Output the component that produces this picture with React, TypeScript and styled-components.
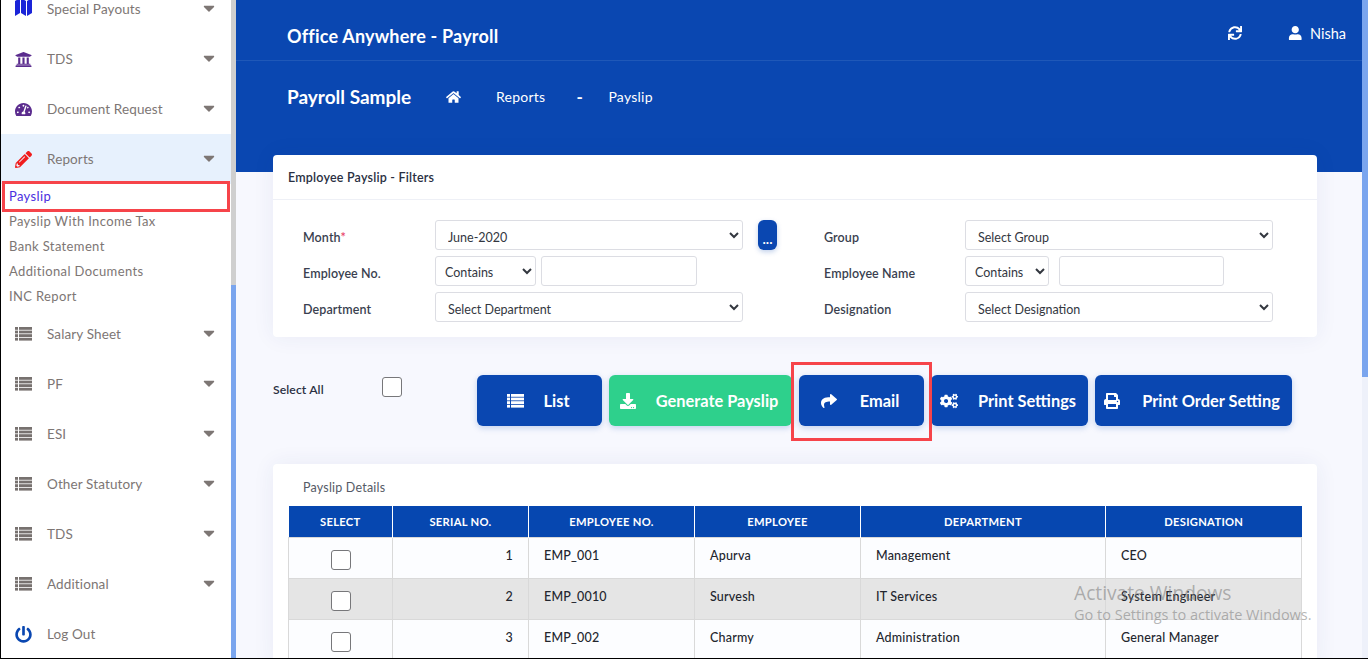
import React from "react"
import styled, { createGlobalStyle } from "styled-components"
import {
  FaUniversity,
  FaTachometerAlt,
  FaPencilAlt,
  FaCaretDown,
  FaPowerOff,
  FaSync,
  FaUser,
  FaHome,
  FaDownload,
  FaShare,
  FaCogs,
  FaPrint,
} from "react-icons/fa"

const BLUE = "#0a47b1"
const FONT = `Lato, "Noto Sans", "Liberation Sans", sans-serif`

const GlobalStyle = createGlobalStyle`
  html, body {
    margin: 0;
    height: 100%;
    overflow: hidden;
    background: #f7f8fe;
    font-family: ${FONT};
  }
  * {
    box-sizing: border-box;
  }
`

const Frame = styled.div`
  position: relative;
  display: flex;
  width: 1368px;
  height: 659px;
  overflow: hidden;
  border-left: 1px solid #000;
  border-bottom: 1px solid #000;
`

const Sidebar = styled.nav`
  width: 230px;
  flex-shrink: 0;
  background: #fff;
  overflow: hidden;
`

const MenuList = styled.div`
  margin-top: -16px;
`

const MenuRow = styled.div<{ $active?: boolean }>`
  display: flex;
  align-items: center;
  height: 50px;
  padding: 0 13px 0 14px;
  background: ${(p) => (p.$active ? "#e7f1fd" : "transparent")};
  color: #7d7674;
  font-size: 13.5px;
  letter-spacing: 0.12px;
`

const MenuIcon = styled.span<{ $color: string }>`
  display: flex;
  align-items: center;
  justify-content: center;
  width: 17px;
  height: 17px;
  margin-right: 15px;
  color: ${(p) => p.$color};
  font-size: 17px;
`

const MenuLabel = styled.span`
  flex: 1;
`

const Caret = styled(FaCaretDown)`
  color: #7d7674;
  font-size: 18px;
  margin-top: -3px;
`

const SubItem = styled.div<{ $current?: boolean }>`
  position: relative;
  height: 25px;
  line-height: 25px;
  padding-left: 8px;
  color: ${(p) => (p.$current ? "#4a2fe0" : "#7d7674")};
  font-size: 13px;
  letter-spacing: 0.36px;
`

const RedBox = styled.span`
  position: absolute;
  left: 1px;
  top: -3px;
  width: 228px;
  height: 31px;
  border: 3px solid #f6444a;
`

const SideScroll = styled.div`
  width: 5px;
  flex-shrink: 0;
  padding-top: 285px;
  background: #cfcfcf;
`

const SideThumb = styled.div`
  height: 100%;
  background: #7aa5ee;
`

const Main = styled.main`
  flex: 1;
  min-width: 0;
  height: 659px;
  overflow: hidden;
`

const Hero = styled.header`
  height: 172px;
  background: ${BLUE};
  color: #fff;
`

const TopBar = styled.div`
  display: flex;
  align-items: center;
  height: 61px;
  padding: 12px 16px 0 51px;
  border-bottom: 1px solid #1f58b8;
`

const AppTitle = styled.div`
  flex: 1;
  font-size: 18px;
  font-weight: 700;
  letter-spacing: 0.2px;
`

const TopAction = styled.div`
  display: flex;
  align-items: center;
  gap: 7px;
  font-size: 14.5px;
  padding-bottom: 6px;
`

const Refresh = styled(FaSync)`
  font-size: 14px;
  margin-right: 39px;
`

const Crumbs = styled.div`
  display: flex;
  align-items: center;
  height: 71px;
  padding-left: 51px;
`

const PageName = styled.div`
  width: 159px;
  font-size: 19px;
  font-weight: 700;
`

const CrumbHome = styled(FaHome)`
  width: 15px;
  height: 14px;
  margin-right: 35px;
`

const Crumb = styled.span`
  font-size: 14px;
  letter-spacing: 0.25px;
`

const CrumbDash = styled.span`
  width: 32px;
  margin-left: 31px;
  font-size: 17px;
  font-weight: 700;
`

const Content = styled.div`
  width: 1044px;
  margin: -17px 0 0 37px;
`

const Card = styled.section`
  background: #fff;
  border-radius: 4px;
  box-shadow: 0 0 22px rgba(40, 60, 130, 0.07);
`

const CardHead = styled.div`
  display: flex;
  align-items: center;
  height: 45px;
  padding-left: 15px;
  border-bottom: 1px solid #eef0f6;
  color: #2a3042;
  font-size: 12.5px;
  font-weight: 600;
  letter-spacing: 0.2px;
`

const FilterGrid = styled.div`
  display: grid;
  grid-template-columns: 132px 308px 15px 19px 47px 141px 308px;
  grid-auto-rows: 30px;
  row-gap: 6px;
  align-items: center;
  padding: 20px 0 15px 30px;
`

const FieldLabel = styled.label`
  padding-top: 4px;
  color: #3a3f4f;
  font-size: 12.5px;
  font-weight: 600;
  letter-spacing: 0.1px;
`

const Required = styled.span`
  color: #e8436a;
`

const Select = styled.select<{ $w?: number }>`
  width: ${(p) => (p.$w ? `${p.$w}px` : "100%")};
  height: 30px;
  padding: ${(p) => (p.$w ? "2px 0 0 5px" : "4px 8px 0")};
  background-color: #fff;
  border: 1px solid #dcdde3;
  border-radius: 3px;
  color: #33373f;
  font-family: ${FONT};
  font-size: 12.5px;
`

const TextInput = styled.input<{ $w: number; $ml: number }>`
  width: ${(p) => p.$w}px;
  height: 30px;
  margin-left: ${(p) => p.$ml}px;
  border: 1px solid #dcdde3;
  border-radius: 3px;
  background: #fff;
`

const InlineField = styled.div`
  display: flex;
`

const MoreButton = styled.button`
  grid-column: 4;
  display: flex;
  align-items: flex-end;
  justify-content: center;
  height: 30px;
  padding: 0 0 5px;
  border: 0;
  border-radius: 6px;
  background: ${BLUE};
  color: #fff;
  font-size: 12px;
  font-weight: 700;
  line-height: 10px;
  box-shadow: 0 2px 5px rgba(10, 71, 177, 0.25);
`

const Toolbar = styled.div`
  display: flex;
  align-items: flex-start;
  margin: 38px 0;
`

const SelectAll = styled.div`
  display: flex;
  align-items: flex-start;
  width: 204px;
  height: 51px;
  padding-top: 2px;
  color: #2a3042;
  font-size: 12.2px;
  font-weight: 600;
  letter-spacing: 0.1px;
`

const SelectAllText = styled.span`
  width: 109px;
  padding-top: 5px;
`

const Check = styled.input.attrs({ type: "checkbox" })`
  appearance: none;
  display: block;
  width: 20px;
  height: 20px;
  margin: 0;
  background: #fff;
  border: 1px solid #77777a;
  border-radius: 3px;
`

const Actions = styled.div`
  display: flex;
  gap: 7px;
`

const ActionWrap = styled.div`
  position: relative;
`

const ActionButton = styled.button<{ $w: number; $green?: boolean; $gap?: number; $iconSize?: number }>`
  display: flex;
  align-items: center;
  justify-content: center;
  gap: ${(p) => p.$gap ?? 21}px;
  width: ${(p) => p.$w}px;
  height: 51px;
  padding: 0 3px 0 0;
  border: 0;
  border-radius: 6px;
  background: ${(p) => (p.$green ? "#2ed08c" : BLUE)};
  color: #fff;
  font-family: ${FONT};
  font-size: 16.4px;
  font-weight: 700;
  box-shadow: 0 2px 6px rgba(10, 71, 177, 0.22);

  svg {
    font-size: ${(p) => p.$iconSize ?? 16}px;
    flex-shrink: 0;
  }
`

const EmailFrame = styled.span`
  position: absolute;
  left: -8px;
  top: -13px;
  width: 141px;
  height: 79px;
  border: 3px solid #f6444a;
  pointer-events: none;
`

const DetailsCard = styled(Card)`
  height: 200px;
  padding: 0 15px;
`

const DetailsTitle = styled.div`
  height: 42px;
  padding: 16px 0 0 15px;
  color: #555a66;
  font-size: 12.5px;
  letter-spacing: 0.2px;
`

const Table = styled.table`
  width: 1013px;
  table-layout: fixed;
  border-collapse: collapse;
  color: #23262e;
  font-size: 12.5px;
  letter-spacing: 0.2px;
`

const HeadCell = styled.th`
  height: 31px;
  padding: 0;
  background: #0647b0;
  border-right: 1px solid #fff;
  color: #fff;
  font-size: 11.2px;
  font-weight: 700;
  letter-spacing: 0.3px;
  text-align: center;

  &:last-child {
    border-right: 0;
  }
`

const Row = styled.tr<{ $shaded: boolean }>`
  height: 41px;
  background: ${(p) => (p.$shaded ? "#e5e5e5" : "#fcfdff")};
`

const Cell = styled.td<{ $align?: string }>`
  padding: 10px 15px 0;
  vertical-align: top;
  border: 1px solid #d9d9d9;
  text-align: ${(p) => p.$align ?? "left"};
  font-weight: 500;
`

const CheckCell = styled.td`
  padding: 12px 0 0;
  vertical-align: top;
  border: 1px solid #d9d9d9;

  input {
    margin: 0 auto;
  }
`

const Watermark = styled.div`
  position: absolute;
  left: 1073px;
  top: 581px;
  color: rgba(120, 120, 120, 0.55);
  font-family: "Open Sans", "Liberation Sans", sans-serif;
  pointer-events: none;
`

const WatermarkTitle = styled.div`
  font-size: 19.2px;
  line-height: 23px;
`

const WatermarkText = styled.div`
  font-size: 14.5px;
  line-height: 22px;
`

const MainScroll = styled.div`
  width: 6px;
  flex-shrink: 0;
  background: #eef1fa;
`

const MainThumb = styled.div`
  height: 377px;
  background: #7aa5ee;
`

const MapGlyph = styled.svg`
  flex-shrink: 0;
  width: 17px;
  height: 18px;
  margin-top: -5px;
`

// font awesome 4 style list, four rows, not in the FA5 set
const ListGlyph = () => (
  <svg width="17" height="14" viewBox="0 0 17 14" fill="currentColor">
    {[0, 3.6, 7.2, 10.8].map((y) => (
      <g key={y}>
        <rect x="0" y={y} width="3" height="2.8" />
        <rect x="4" y={y} width="13" height="2.8" />
      </g>
    ))}
  </svg>
)

const MapIcon = () => (
  <MapGlyph viewBox="0 0 17 18" fill="currentColor">
    <polygon points="0,3 5,0 5,15 0,18" />
    <polygon points="6,0 11,3 11,18 6,15" />
    <polygon points="12,3 17,0 17,15 12,18" />
  </MapGlyph>
)

const topMenu = [
  { label: "Special Payouts", icon: <MapIcon />, color: "#1a24d8" },
  { label: "TDS", icon: <FaUniversity />, color: "#5b2c8e" },
  { label: "Document Request", icon: <FaTachometerAlt />, color: "#5b2c8e" },
]

const subMenu = ["Payslip With Income Tax", "Bank Statement", "Additional Documents", "INC Report"]
const lowerMenu = ["Salary Sheet", "PF", "ESI", "Other Statutory", "TDS", "Additional"]

const columns = [
  { title: "SELECT", width: 104 },
  { title: "SERIAL NO.", width: 136 },
  { title: "EMPLOYEE NO.", width: 166 },
  { title: "EMPLOYEE", width: 166 },
  { title: "DEPARTMENT", width: 245 },
  { title: "DESIGNATION", width: 196 },
]

const rows = [
  ["1", "EMP_001", "Apurva", "Management", "CEO"],
  ["2", "EMP_0010", "Survesh", "IT Services", "System Engineer"],
  ["3", "EMP_002", "Charmy", "Administration", "General Manager"],
]

export default function App() {
  return (
    <>
      <GlobalStyle />
      <Frame>
        <Sidebar>
          <MenuList>
            {topMenu.map((m) => (
              <MenuRow key={m.label}>
                <MenuIcon $color={m.color}>{m.icon}</MenuIcon>
                <MenuLabel>{m.label}</MenuLabel>
                <Caret />
              </MenuRow>
            ))}
            <MenuRow $active>
              <MenuIcon $color="#f01d1d">
                <FaPencilAlt />
              </MenuIcon>
              <MenuLabel>Reports</MenuLabel>
              <Caret />
            </MenuRow>
            <SubItem $current>
              Payslip
              <RedBox />
            </SubItem>
            {subMenu.map((s) => (
              <SubItem key={s}>{s}</SubItem>
            ))}
            {lowerMenu.map((m) => (
              <MenuRow key={m}>
                <MenuIcon $color="#77716f">
                  <ListGlyph />
                </MenuIcon>
                <MenuLabel>{m}</MenuLabel>
                <Caret />
              </MenuRow>
            ))}
            <MenuRow>
              <MenuIcon $color={BLUE}>
                <FaPowerOff />
              </MenuIcon>
              <MenuLabel>Log Out</MenuLabel>
            </MenuRow>
          </MenuList>
        </Sidebar>
        <SideScroll>
          <SideThumb />
        </SideScroll>

        <Main>
          <Hero>
            <TopBar>
              <AppTitle>Office Anywhere - Payroll</AppTitle>
              <TopAction>
                <Refresh />
                <FaUser />
                Nisha
              </TopAction>
            </TopBar>
            <Crumbs>
              <PageName>Payroll Sample</PageName>
              <CrumbHome />
              <Crumb>Reports</Crumb>
              <CrumbDash>-</CrumbDash>
              <Crumb>Payslip</Crumb>
            </Crumbs>
          </Hero>

          <Content>
            <Card>
              <CardHead>Employee Payslip - Filters</CardHead>
              <FilterGrid>
                <FieldLabel>
                  Month<Required>*</Required>
                </FieldLabel>
                <Select defaultValue="June-2020">
                  <option>June-2020</option>
                </Select>
                <MoreButton>...</MoreButton>
                <span />
                <FieldLabel>Group</FieldLabel>
                <Select>
                  <option>Select Group</option>
                </Select>

                <FieldLabel>Employee No.</FieldLabel>
                <InlineField>
                  <Select $w={101}>
                    <option>Contains</option>
                  </Select>
                  <TextInput $w={156} $ml={5} />
                </InlineField>
                <span />
                <span />
                <span />
                <FieldLabel>Employee Name</FieldLabel>
                <InlineField>
                  <Select $w={84}>
                    <option>Contains</option>
                  </Select>
                  <TextInput $w={165} $ml={10} />
                </InlineField>

                <FieldLabel>Department</FieldLabel>
                <Select>
                  <option>Select Department</option>
                </Select>
                <span />
                <span />
                <span />
                <FieldLabel>Designation</FieldLabel>
                <Select>
                  <option>Select Designation</option>
                </Select>
              </FilterGrid>
            </Card>

            <Toolbar>
              <SelectAll>
                <SelectAllText>Select All</SelectAllText>
                <Check />
              </SelectAll>
              <Actions>
                <ActionButton $w={125} $gap={20}>
                  <ListGlyph />
                  List
                </ActionButton>
                <ActionButton $w={183} $green $gap={20}>
                  <FaDownload />
                  Generate Payslip
                </ActionButton>
                <ActionWrap>
                  <ActionButton $w={125} $gap={23}>
                    <FaShare />
                    Email
                  </ActionButton>
                  <EmailFrame />
                </ActionWrap>
                <ActionButton $w={157} $gap={20} $iconSize={18}>
                  <FaCogs />
                  Print Settings
                </ActionButton>
                <ActionButton $w={197} $gap={22}>
                  <FaPrint />
                  Print Order Setting
                </ActionButton>
              </Actions>
            </Toolbar>

            <DetailsCard>
              <DetailsTitle>Payslip Details</DetailsTitle>
              <Table>
                <colgroup>
                  {columns.map((c) => (
                    <col key={c.title} width={c.width} />
                  ))}
                </colgroup>
                <thead>
                  <tr>
                    {columns.map((c) => (
                      <HeadCell key={c.title}>{c.title}</HeadCell>
                    ))}
                  </tr>
                </thead>
                <tbody>
                  {rows.map((r, i) => (
                    <Row key={r[0]} $shaded={i % 2 === 1}>
                      <CheckCell>
                        <Check />
                      </CheckCell>
                      <Cell $align="right">{r[0]}</Cell>
                      <Cell>{r[1]}</Cell>
                      <Cell>{r[2]}</Cell>
                      <Cell>{r[3]}</Cell>
                      <Cell>{r[4]}</Cell>
                    </Row>
                  ))}
                </tbody>
              </Table>
            </DetailsCard>
          </Content>
        </Main>
        <MainScroll>
          <MainThumb />
        </MainScroll>

        <Watermark>
          <WatermarkTitle>Activate Windows</WatermarkTitle>
          <WatermarkText>Go to Settings to activate Windows.</WatermarkText>
        </Watermark>
      </Frame>
    </>
  )
}
